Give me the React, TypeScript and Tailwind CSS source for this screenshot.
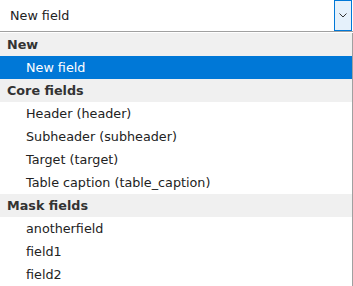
import { ReactNode } from "react";

const GROUP = "h-[23px] flex items-center pl-[7px] bg-[#f0f0f0] font-bold text-[#333]";
const ITEM = "h-[23px] flex items-center pl-[26px] text-[#222]";

const Group = ({ children }: { children: ReactNode }) => <div className={GROUP}>{children}</div>;

const Item = ({ children, active }: { children: ReactNode; active?: boolean }) => (
  <div className={active ? ITEM + " bg-[#0078d7] !text-white" : ITEM}>{children}</div>
);

const App = () => {
  return (
    <div className="w-[353px] h-[286px] overflow-hidden bg-white text-[12.75px] font-['DejaVu_Sans',sans-serif]">
      {/* select */}
      <div className="h-[32px] flex border-b border-[#a0a0a0]">
        <div className="flex-1 flex items-center pl-[10px] text-[#222]">New field</div>
        <div className="w-[18px] h-[31px] border border-[#0078d7] bg-[#e5f1fb] flex items-center justify-center">
          <svg width="8" height="5" viewBox="0 0 8 5" fill="none">
            <path d="M0.5 0.5 L4 4 L7.5 0.5" stroke="#333" strokeWidth="1" />
          </svg>
        </div>
        <div className="w-px" />
      </div>
      {/* options */}
      <div className="mt-px border-r border-[#a0a0a0]">
        <Group>New</Group>
        <Item active>New field</Item>
        <Group>Core fields</Group>
        <Item>Header (header)</Item>
        <Item>Subheader (subheader)</Item>
        <Item>Target (target)</Item>
        <Item>Table caption (table_caption)</Item>
        <Group>Mask fields</Group>
        <Item>anotherfield</Item>
        <Item>field1</Item>
        <Item>field2</Item>
      </div>
    </div>
  );
};

export default App;
